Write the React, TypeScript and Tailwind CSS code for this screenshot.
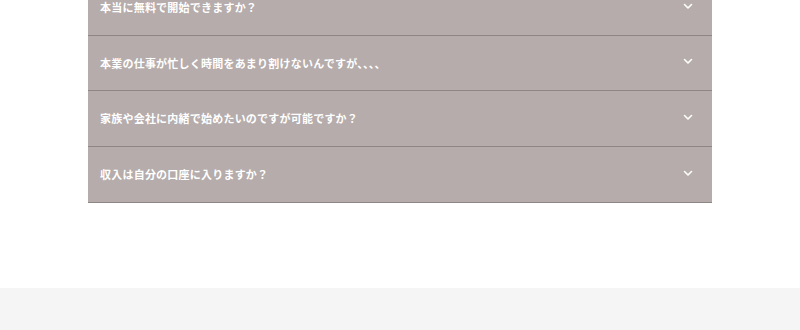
const faqs = [
  "本当に無料で開始できますか？",
  "本業の仕事が忙しく時間をあまり割けないんですが､､､､",
  "家族や会社に内緒で始めたいのですが可能ですか？",
  "収入は自分の口座に入りますか？",
];

function Chevron() {
  return (
    <svg width="10" height="10" viewBox="0 0 10 10" fill="none">
      <path d="M1.5 3.5 L5 7 L8.5 3.5" stroke="#ffffff" strokeWidth="1.6" strokeLinecap="round" strokeLinejoin="round" />
    </svg>
  );
}

export default function App() {
  return (
    <div className="w-[800px] h-[330px] overflow-hidden bg-white flex flex-col" style={{ fontFamily: '"Noto Sans CJK JP", "Noto Sans", sans-serif' }}>
      <div className="-mt-[20px] mx-[88px] flex flex-col bg-[#b5acab]">
        {faqs.map((q, i) => (
          <div key={q} className={`${i === 1 ? "h-[55px]" : "h-[56px]"} border-b border-[#8e8585] flex items-center justify-between pl-3 pr-[19px]`}>
            <span className="text-[11px] font-bold text-white tracking-[0.22px]">{q}</span>
            <span className="-mt-[4px]">
              <Chevron />
            </span>
          </div>
        ))}
      </div>
      <div className="flex-1" />
      <div className="h-[42px] bg-[#f5f5f5]" />
    </div>
  );
}
